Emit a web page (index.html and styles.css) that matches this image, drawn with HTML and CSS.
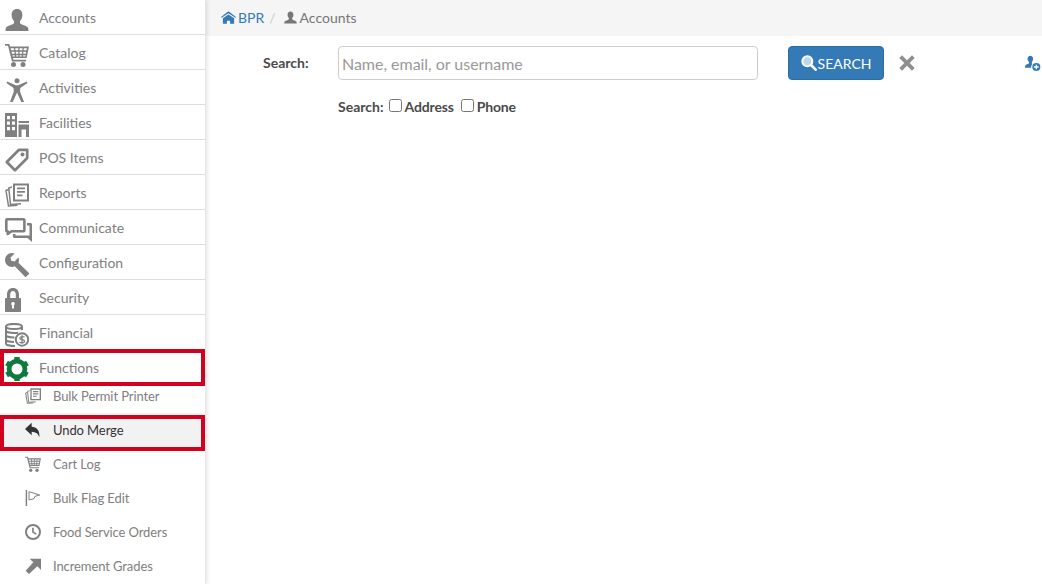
FILE: index.html
```html
<!DOCTYPE html>
<html lang="en">
<head>
<meta charset="utf-8">
<title>Accounts</title>
<link rel="stylesheet" href="styles.css">
</head>
<body>
<svg class="defs" width="0" height="0" aria-hidden="true">
  <symbol id="i-user" viewBox="0 0 24 24"><path d="M12 1c3.600 0 5.400 2.600 5.400 6 0 2.600-1.100 4.800-2.400 6v1.500c0 1 .6 1.500 1.900 2 3 1.100 5.300 1.800 6.100 3.300.4.700.5 1.900.5 3.200H.5c0-1.300.1-2.500.5-3.200.8-1.500 3.100-2.200 6.100-3.300 1.300-.5 1.900-1 1.900-2V13C7.700 11.800 6.600 9.600 6.600 7c0-3.400 1.800-6 5.400-6z"/></symbol>
  <symbol id="i-cart" viewBox="0 0 24 24"><path fill-rule="evenodd" d="M0 1h4.300l.7 2.500h19l-2.400 11.500H8l.4 1.700H21v1.800H7L3 2.800H0zM5.600 5.300l.5 2h3.100l-.3-2zm4.600 0 .3 2h2.800v-2zm4.400 0v2h2.700l.3-2zm4.300 0-.3 2h2.900l.4-2zM6.500 8.800l.5 1.900h2.600l-.2-1.900zm4.300 0 .2 1.900h2.300V8.800zm3.800 0v1.900h2.300l.2-1.900zm3.800 0-.2 1.900h2.600l.4-1.900zM7.400 12.200l.4 1.300h2l-.2-1.300zm3.800 0 .1 1.300h2v-1.300zm3.400 0v1.300h2l.1-1.300zm3.600 0-.1 1.300h2.200l.3-1.300z"/><circle cx="8.500" cy="21.500" r="2.500"/><circle cx="18" cy="21.500" r="2.500"/></symbol>
  <symbol id="i-person" viewBox="0 0 24 24"><circle cx="12" cy="2.800" r="2.500"/><path d="M1.500 5 2.300 3.400l7.200 3.400c1.600.7 3.400.7 5 0l7.200-3.400.8 1.600-7.200 5-.3 3.500L19 24h-2.800L12 14.500 7.800 24H5l3.800-10.500-.3-3.500z"/></symbol>
  <symbol id="i-building" viewBox="0 0 24 24"><path fill-rule="evenodd" d="M0 0h12v24H0zM2 3v3.200h3V3zm5 0v3.200h3V3zM2 8.500v3.200h3V8.500zm5 0v3.200h3V8.500zM2 14v3.200h3V14zm5 0v3.200h3V14zM13.500 8H24v2h-10.500zM13.500 11.500H24V24h-3v-7.500h-4.500V24h-3z"/></symbol>
  <symbol id="i-tag" viewBox="0 0 24 24"><path d="M14 1.800h8.200V10L10 22.200 1.800 14z" fill="none" stroke="currentColor" stroke-width="2.700" stroke-linejoin="round"/><circle cx="17.500" cy="6.500" r="2"/></symbol>
  <symbol id="i-reports" viewBox="0 0 24 24"><path fill-rule="evenodd" d="M8 .5h16v18H8zM10 2.500v14h12v-14zM12 4.500h8v1.800h-8zM12 8h8v1.800h-8zM12 11.500h5.500v1.800H12z"/><path d="M7 4 3.800 5l1.700 16.500 10.500-.7M3.600 6.500 1 7.500l2.500 15.500 9-.7" fill="none" stroke="currentColor" stroke-width="1.500"/></symbol>
  <symbol id="i-chat" viewBox="0 0 27 24"><path d="M2 1.300h16.500c.5 0 .9.400.9.900v10.100c0 .5-.4.900-.9.900H6.500L2.700 16v-2.800H2c-.5 0-.7-.4-.7-.9V2.200c0-.5.200-.9.700-.9z" fill="none" stroke="currentColor" stroke-width="2.600" stroke-linejoin="round"/><path d="M22 5h3.500c.8 0 1.500.7 1.500 1.500V24l-4.500-4H9.500C8.700 20 8 19.300 8 18.500V16h2.500v1.500h13.500l.5.500V7.500H22z"/></symbol>
  <symbol id="i-wrench" viewBox="0 0 24 24"><path d="M7 0c1 0 1.800.2 2.600.6L5.500 4.500l.8 3.200 3.200.8 3.900-4.100c.4.800.6 1.700.6 2.600 0 1-.2 1.900-.6 2.700L24 20c.3.300.3.800 0 1.100l-3 2.700c-.3.300-.7.300-1 0L9.800 13.300c-.9.400-1.800.7-2.800.7-3.900 0-7-3.100-7-7s3.100-7 7-7z"/></symbol>
  <symbol id="i-lock" viewBox="0 0 16 24"><path fill-rule="evenodd" d="M8 0c3.700 0 6 2.700 6 6.500V10h1c.6 0 1 .4 1 1v12c0 .6-.4 1-1 1H1c-.6 0-1-.4-1-1V11c0-.6.4-1 1-1h1V6.500C2 2.700 4.300 0 8 0zm0 3c-1.700 0-2.800 1.400-2.800 3.700V10h5.600V6.700C10.800 4.400 9.700 3 8 3zM8 14a1.800 1.800 0 0 0-1 3.300V20.500h2V17.300A1.800 1.800 0 0 0 8 14z"/></symbol>
  <symbol id="i-coins" viewBox="0 0 24 24"><g fill="none" stroke="currentColor" stroke-width="2"><ellipse cx="9" cy="3.500" rx="8" ry="2.600"/><path d="M1 3.500v4c0 1.400 3.600 2.600 8 2.600 1.500 0 3-.1 4.200-.5M17 3.500V7M1 7.500v4.500c0 1.400 3.600 2.600 8 2.600h.5M1 12v4.500c0 1.400 3.600 2.600 8 2.600M1 16.500v4c0 1.400 3.600 2.600 9 2.600"/><circle cx="17" cy="16.500" r="6.200"/></g><path d="M19.500 14.200c-.6-.8-4.700-1.200-4.700.9 0 2.300 4.700 1 4.700 3.100 0 2.100-4.200 1.800-5 .8M17 12.300v8.400" fill="none" stroke="currentColor" stroke-width="1.300"/></symbol>
  <symbol id="i-gear" viewBox="0 0 24 24"><circle cx="12" cy="12" r="7.900" fill="none" stroke="currentColor" stroke-width="4.800"/><rect x="9.300" y="0" width="5.400" height="5"/><rect x="9.300" y="19" width="5.400" height="5"/><rect x="9.300" y="0" width="5.400" height="5" transform="rotate(60 12 12)"/><rect x="9.300" y="0" width="5.400" height="5" transform="rotate(120 12 12)"/><rect x="9.300" y="0" width="5.400" height="5" transform="rotate(240 12 12)"/><rect x="9.300" y="0" width="5.400" height="5" transform="rotate(300 12 12)"/></symbol>
  <symbol id="i-undo" viewBox="0 0 24 24"><path d="M10 1v6c7 .3 12.500 5 11.500 16C20 17.500 16.500 15 10 14.500V20L0 10.500z"/></symbol>
  <symbol id="i-flag" viewBox="0 0 24 24"><path d="M1 0h2.200v24H1z"/><path d="M6 2.500 22 7.500l-7 2-1.500 3.500L6 15z" fill="none" stroke="currentColor" stroke-width="1.500"/></symbol>
  <symbol id="i-clock" viewBox="0 0 24 24"><path fill-rule="evenodd" d="M12 0a12 12 0 1 1 0 24 12 12 0 0 1 0-24zm0 3a9 9 0 1 0 0 18 9 9 0 0 0 0-18zm-1.300 2.500h2.500v6.200l4.300 2.600-1.200 2-5.600-3.400z"/></symbol>
  <symbol id="i-arrow" viewBox="0 0 24 24"><path d="M7 1h17v17l-5.500-5.500L6 24l-5-5 11.500-12.500z"/></symbol>
  <symbol id="i-home" viewBox="0 0 24 24"><path d="M12 2 24 11l-1 1.500L12 5 1 12.500 0 11zM12 7l9 6v9h-6.500v-5h-5v5H3v-9z"/></symbol>
  <symbol id="i-search" viewBox="0 0 24 24"><circle cx="9.500" cy="9.500" r="7.500" fill="#bcd6ea" stroke="#fff" stroke-width="3"/><path d="m15 15 7 7" stroke="#fff" stroke-width="4" stroke-linecap="round"/></symbol>
  <symbol id="i-x" viewBox="0 0 24 24"><path d="M4.500.5 12 8 19.500.5l4 4L16 12l7.500 7.500-4 4L12 16l-7.500 7.500-4-4L8 12 .5 4.500z"/></symbol>
  <symbol id="i-useradd" viewBox="0 0 24 24"><path d="M8 1c2.700 0 4.200 2 4.200 4.700 0 2-.8 3.700-1.900 4.700v1.800c0 .6.400 1 1.100 1.300-1.700 1.300-2.600 3.500-2.100 5.500H0c0-1.500 0-2.500.5-3.200.8-1.300 2.700-1.800 4.500-2.600.7-.3 1-.7 1-1.300v-1.500C4.800 9.400 3.800 7.700 3.800 5.700 3.800 3 5.300 1 8 1z"/><path fill-rule="evenodd" d="M17 12a6 6 0 1 1 0 12 6 6 0 0 1 0-12zm-1 2.500v2.500h-2.500v2h2.500v2.500h2V19h2.500v-2H18v-2.500z"/></symbol>
</svg>
<div class="app">
  <nav class="sidebar">
    <ul class="menu">
      <li class="menu-item"><svg class="icon"><use href="#i-user"/></svg><span>Accounts</span></li>
      <li class="menu-item"><svg class="icon"><use href="#i-cart"/></svg><span>Catalog</span></li>
      <li class="menu-item"><svg class="icon"><use href="#i-person"/></svg><span>Activities</span></li>
      <li class="menu-item"><svg class="icon"><use href="#i-building"/></svg><span>Facilities</span></li>
      <li class="menu-item"><svg class="icon"><use href="#i-tag"/></svg><span>POS Items</span></li>
      <li class="menu-item"><svg class="icon"><use href="#i-reports"/></svg><span>Reports</span></li>
      <li class="menu-item"><svg class="icon icon-wide"><use href="#i-chat"/></svg><span>Communicate</span></li>
      <li class="menu-item"><svg class="icon"><use href="#i-wrench"/></svg><span>Configuration</span></li>
      <li class="menu-item"><svg class="icon icon-narrow"><use href="#i-lock"/></svg><span>Security</span></li>
      <li class="menu-item"><svg class="icon"><use href="#i-coins"/></svg><span>Financial</span></li>
      <li class="menu-item menu-item-open highlighted"><svg class="icon icon-green"><use href="#i-gear"/></svg><span>Functions</span></li>
    </ul>
    <ul class="submenu">
      <li class="sub-item"><svg class="sub-icon"><use href="#i-reports"/></svg><span>Bulk Permit Printer</span></li>
      <li class="sub-item sub-item-active highlighted"><svg class="sub-icon"><use href="#i-undo"/></svg><span>Undo Merge</span></li>
      <li class="sub-item"><svg class="sub-icon"><use href="#i-cart"/></svg><span>Cart Log</span></li>
      <li class="sub-item"><svg class="sub-icon"><use href="#i-flag"/></svg><span>Bulk Flag Edit</span></li>
      <li class="sub-item"><svg class="sub-icon"><use href="#i-clock"/></svg><span>Food Service Orders</span></li>
      <li class="sub-item"><svg class="sub-icon"><use href="#i-arrow"/></svg><span>Increment Grades</span></li>
    </ul>
  </nav>
  <main class="content">
    <div class="breadcrumb">
      <a class="crumb-link" href="#"><svg class="crumb-icon"><use href="#i-home"/></svg>BPR</a>
      <span class="crumb-sep">/</span>
      <span class="crumb-current"><svg class="crumb-icon-small"><use href="#i-user"/></svg>Accounts</span>
    </div>
    <form class="search-form">
      <div class="search-row">
        <label class="search-label" for="q">Search:</label>
        <input class="search-input" id="q" type="text" placeholder="Name, email, or username">
        <button class="search-button" type="button"><svg class="button-icon"><use href="#i-search"/></svg>SEARCH</button>
        <svg class="clear-icon"><use href="#i-x"/></svg>
        <svg class="add-icon"><use href="#i-useradd"/></svg>
      </div>
      <div class="options-row">
        <span class="options-label">Search:</span>
        <label class="option"><input type="checkbox">Address</label>
        <label class="option"><input type="checkbox">Phone</label>
      </div>
    </form>
  </main>
</div>
</body>
</html>
```
FILE: styles.css
```css
* { box-sizing: border-box; }
html, body { margin: 0; height: 100%; overflow: hidden; background: #fff; }
body { font-family: Lato, "Open Sans", sans-serif; font-size: 14px; color: #333; }
ul { list-style: none; margin: 0; padding: 0; }
.defs { position: absolute; }
.app { display: flex; height: 584px; }
.sidebar { width: 206px; flex: none; height: 100%; border-right: 1px solid #e6e6e6; box-shadow: 1px 0 4px rgba(0,0,0,.12); position: relative; z-index: 1; background: #fff; }
.menu-item { display: flex; align-items: center; height: 35px; border-bottom: 1px solid #ddd; color: #808080; font-size: 14px; padding-top: 1px; }
.menu-item-open { border-bottom: 0; padding-top: 0; padding-bottom: 1px; }
.icon { width: 24px; height: 24px; margin: 4px 10px 0 5px; fill: #808080; color: #808080; flex: none; }
.icon-wide { width: 27px; margin-right: 7px; }
.icon-narrow { width: 16px; margin-right: 18px; }
.icon-green { fill: #0d7a3e; color: #0d7a3e; }
.submenu { margin-top: -6px; }
.sub-item { display: flex; align-items: center; height: 34px; color: #808080; font-size: 13px; letter-spacing: -.1px; }
.sub-item-active { background: #f2f2f2; color: #333; }
.sub-icon { width: 16px; height: 16px; margin: 0 12px 0 25px; fill: #808080; color: #808080; flex: none; }
.sub-item-active .sub-icon { fill: #333; }
.highlighted { position: relative; }
.highlighted::after { content: ""; position: absolute; inset: -1px 0; border: 4px solid #d0021f; pointer-events: none; }
.sub-item-active.highlighted::after { inset: 2px 0 -4px; }
.content { flex: 1; min-width: 0; }
.breadcrumb { display: flex; align-items: center; height: 36px; background: #f5f5f5; padding: 0 0 1px 15px; color: #777; }
.crumb-link { color: #337ab7; text-decoration: none; display: flex; align-items: center; }
.crumb-icon { width: 15px; height: 15px; fill: #337ab7; margin-right: 2px; }
.crumb-sep { color: #ccc; margin: 0 8px 0 5px; }
.crumb-current { display: flex; align-items: center; }
.crumb-icon-small { width: 13px; height: 13px; fill: #777; margin-right: 3px; }
.search-form { padding-top: 10px; }
.search-row { display: flex; align-items: center; height: 34px; padding-left: 57px; }
.search-label { font-weight: 700; width: 75px; flex: none; color: #4a4a4a; margin-top: -1px; }
.search-input { width: 420px; height: 34px; flex: none; border: 1px solid #ccc; border-radius: 4px; padding: 0 3px; font: 16px Lato, sans-serif; color: #555; letter-spacing: -.03px; }
.search-input::placeholder { color: #999; opacity: 1; }
.search-button { display: flex; align-items: center; justify-content: center; width: 96px; height: 34px; flex: none; margin-left: 30px; border: 1px solid #2e6da4; border-radius: 4px; background: #337ab7; color: #fff; font: 14px Lato, sans-serif; padding: 0; }
.button-icon { width: 16px; height: 16px; margin-right: 1px; }
.clear-icon { width: 16px; height: 16px; fill: #8f8f8f; margin-left: 15px; flex: none; }
.add-icon { width: 16px; height: 16px; fill: #337ab7; margin-left: auto; margin-right: 1px; flex: none; }
.options-row { display: flex; align-items: center; margin: 18px 0 0 132px; font-weight: 700; color: #4a4a4a; }
.options-label { margin-right: 5px; }
.option { display: flex; align-items: center; margin-right: 7px; letter-spacing: -.15px; }
.option input { margin: 0 3px 3px 0; width: 13px; height: 13px; }
```
